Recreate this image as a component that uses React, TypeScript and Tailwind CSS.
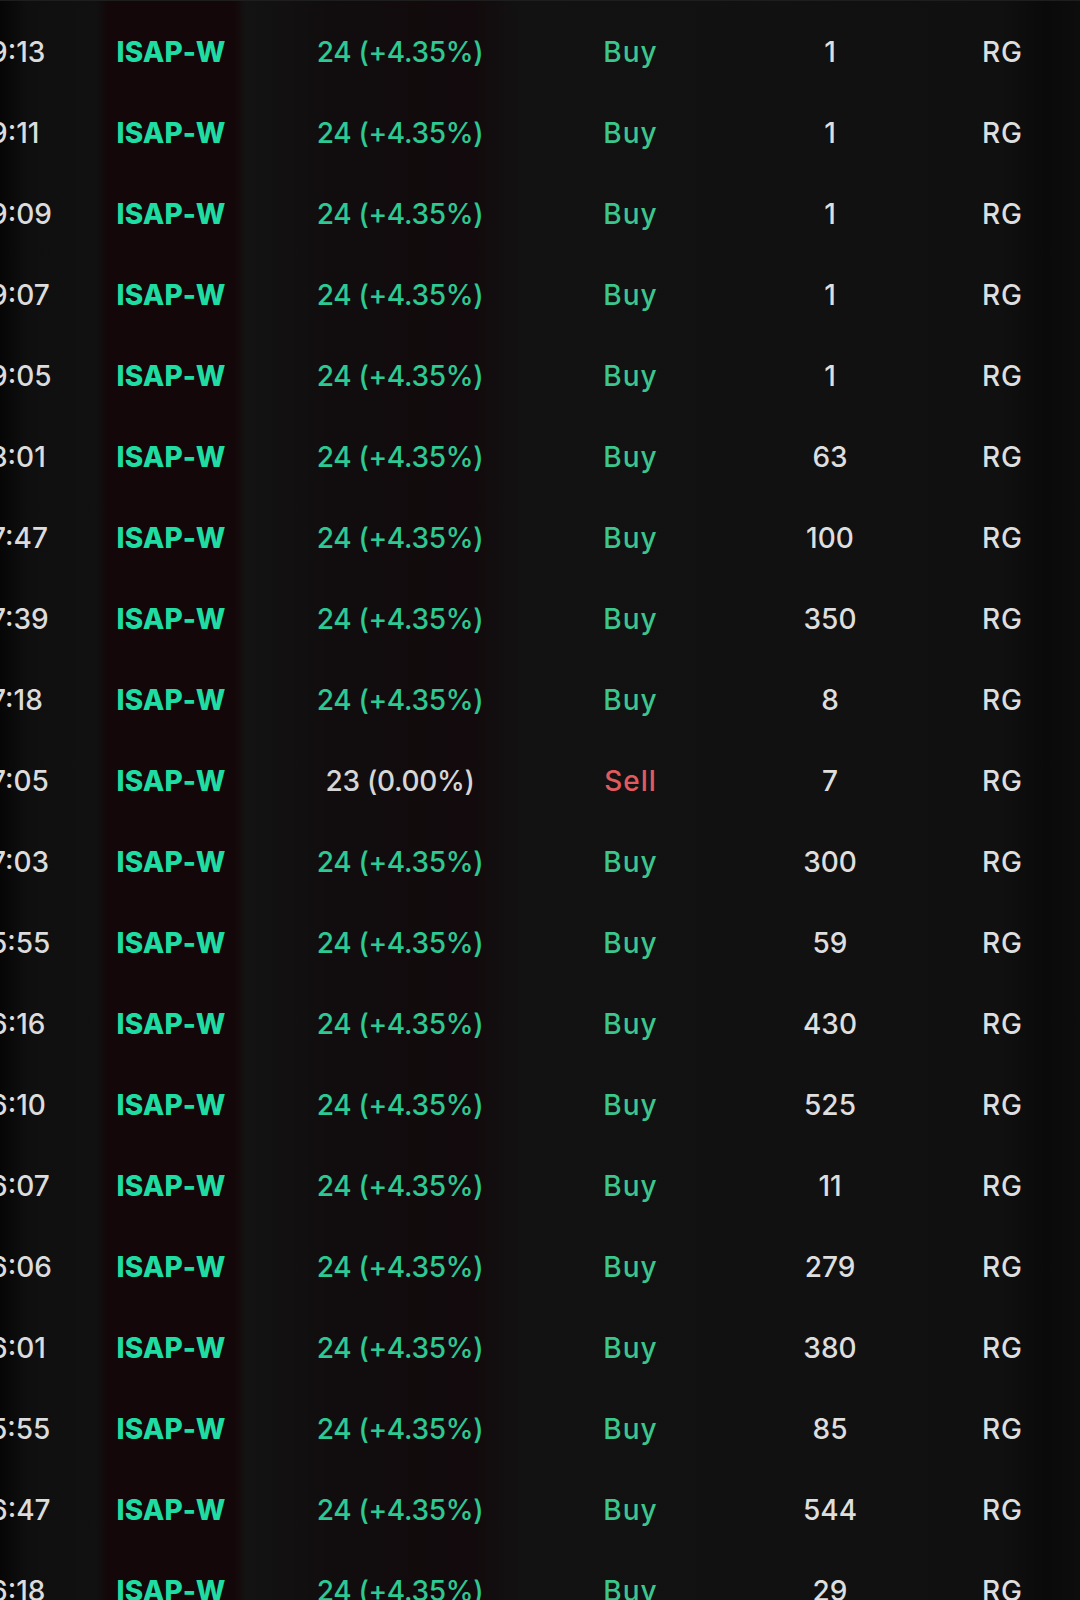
import React from 'react';

interface Trade {
  time: string;
  price: string;
  side: 'Buy' | 'Sell';
  qty: number;
}

const up = '24 (+4.35%)';

const trades: Trade[] = [
  { time: '9:13', price: up, side: 'Buy', qty: 1 },
  { time: '9:11', price: up, side: 'Buy', qty: 1 },
  { time: '9:09', price: up, side: 'Buy', qty: 1 },
  { time: '9:07', price: up, side: 'Buy', qty: 1 },
  { time: '9:05', price: up, side: 'Buy', qty: 1 },
  { time: '8:01', price: up, side: 'Buy', qty: 63 },
  { time: '7:47', price: up, side: 'Buy', qty: 100 },
  { time: '7:39', price: up, side: 'Buy', qty: 350 },
  { time: '7:18', price: up, side: 'Buy', qty: 8 },
  { time: '7:05', price: '23 (0.00%)', side: 'Sell', qty: 7 },
  { time: '7:03', price: up, side: 'Buy', qty: 300 },
  { time: '5:55', price: up, side: 'Buy', qty: 59 },
  { time: '6:16', price: up, side: 'Buy', qty: 430 },
  { time: '6:10', price: up, side: 'Buy', qty: 525 },
  { time: '6:07', price: up, side: 'Buy', qty: 11 },
  { time: '6:06', price: up, side: 'Buy', qty: 279 },
  { time: '6:01', price: up, side: 'Buy', qty: 380 },
  { time: '5:55', price: up, side: 'Buy', qty: 85 },
  { time: '6:47', price: up, side: 'Buy', qty: 544 },
  { time: '6:18', price: up, side: 'Buy', qty: 29 },
];

function TradeRow({ trade }: { trade: Trade }) {
  const isBuy = trade.side === 'Buy';
  const flat = trade.price.startsWith('23');
  return (
    <div className="flex h-[81px] items-center text-[28px] font-medium leading-none">
      {/* time, left part scrolled out of view */}
      <div className="-ml-[10px] w-[110px] shrink-0 text-[#dcdcdc]">{trade.time}</div>
      <div className="w-[142px] shrink-0 text-center font-extrabold tracking-[0.2px] text-[#1fdca2]">
        ISAP-W
      </div>
      <div
        className={`w-[316px] shrink-0 text-center tracking-[-0.3px] ${flat ? 'text-[#d6d6d6]' : 'text-[#2ec893]'}`}
      >
        {trade.price}
      </div>
      <div
        className={`w-[144px] shrink-0 pl-[1px] text-center tracking-[1px] ${isBuy ? 'text-[#3cc58c]' : 'text-[#e05a5e]'}`}
      >
        {trade.side}
      </div>
      <div className="w-[256px] shrink-0 text-center text-[#dedede]">{trade.qty}</div>
      <div className="w-[88px] shrink-0 pl-[1px] text-center tracking-[1px] text-[#dedede]">RG</div>
    </div>
  );
}

export default function App() {
  return (
    <div
      className="h-[1600px] w-[1080px] overflow-hidden border-t border-[#1e1e1e] bg-[linear-gradient(to_right,#060606_0px,#0f0f0f_28px,#111111_96px,#130709_108px,#130709_234px,#131313_246px,#110d0e_330px,#120a0c_470px,#121212_520px,#111111_800px,#101010_1000px,#0a0a0a_1045px,#0d0d0d_1080px)] pt-[10px]"
      style={{ fontFamily: 'Inter, "Noto Sans", sans-serif' }}
    >
      {trades.map((t, i) => (
        <TradeRow key={i} trade={t} />
      ))}
    </div>
  );
}
